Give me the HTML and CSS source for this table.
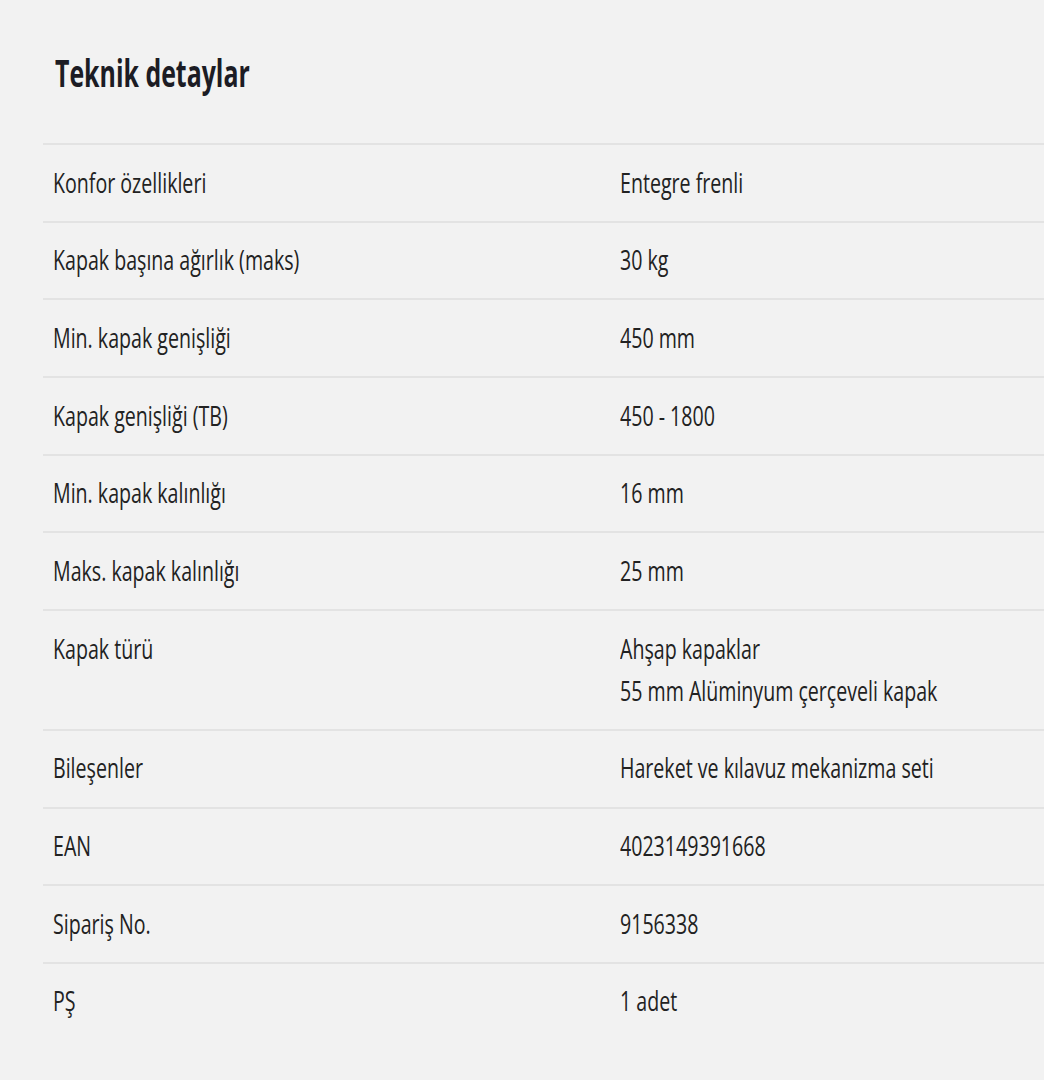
FILE: index.html
```html
<!DOCTYPE html>
<html lang="tr">
<head>
<meta charset="utf-8">
<title>Teknik detaylar</title>
<link rel="stylesheet" href="styles.css">
</head>
<body>
<section class="specs">
  <h2 class="title"><span class="sq">Teknik detaylar</span></h2>
  <div class="table">
    <div class="row"><div class="label"><span class="sq">Konfor özellikleri</span></div><div class="value"><span class="sq">Entegre frenli</span></div></div>
    <div class="row"><div class="label"><span class="sq">Kapak başına ağırlık (maks)</span></div><div class="value"><span class="sq">30 kg</span></div></div>
    <div class="row"><div class="label"><span class="sq">Min. kapak genişliği</span></div><div class="value"><span class="sq">450 mm</span></div></div>
    <div class="row"><div class="label"><span class="sq">Kapak genişliği (TB)</span></div><div class="value"><span class="sq">450 - 1800</span></div></div>
    <div class="row"><div class="label"><span class="sq">Min. kapak kalınlığı</span></div><div class="value"><span class="sq">16 mm</span></div></div>
    <div class="row"><div class="label"><span class="sq">Maks. kapak kalınlığı</span></div><div class="value"><span class="sq">25 mm</span></div></div>
    <div class="row"><div class="label"><span class="sq">Kapak türü</span></div><div class="value"><span class="sq">Ahşap kapaklar<br>55 mm Alüminyum çerçeveli kapak</span></div></div>
    <div class="row"><div class="label"><span class="sq">Bileşenler</span></div><div class="value"><span class="sq">Hareket ve kılavuz mekanizma seti</span></div></div>
    <div class="row"><div class="label"><span class="sq">EAN</span></div><div class="value"><span class="sq">4023149391668</span></div></div>
    <div class="row"><div class="label"><span class="sq">Sipariş No.</span></div><div class="value"><span class="sq">9156338</span></div></div>
    <div class="row"><div class="label"><span class="sq">PŞ</span></div><div class="value"><span class="sq">1 adet</span></div></div>
  </div>
</section>
</body>
</html>
```
FILE: styles.css
```css
html, body {
  margin: 0;
  padding: 0;
  background: #f2f2f2;
  overflow: hidden;
}
body {
  font-family: "Open Sans", "Liberation Sans", sans-serif;
  color: #222;
}
.specs {
  padding: 47px 0 0 43px;
}
.title {
  margin: 0 0 46px 0;
  padding-left: 12px;
  font-size: 38px;
  line-height: 50px;
  font-weight: 700;
  color: #1c1c24;
  white-space: nowrap;
}
.sq {
  display: inline-block;
  transform: scaleX(0.7);
  transform-origin: 0 50%;
  white-space: nowrap;
}
.title .sq {
  transform: scaleX(0.655);
}
.row {
  display: grid;
  grid-template-columns: 567px 1fr;
  border-top: 2px solid #e3e3e3;
  padding: 15.5px 0 18.2px 10px;
  font-size: 28px;
  line-height: 42px;
}
```
